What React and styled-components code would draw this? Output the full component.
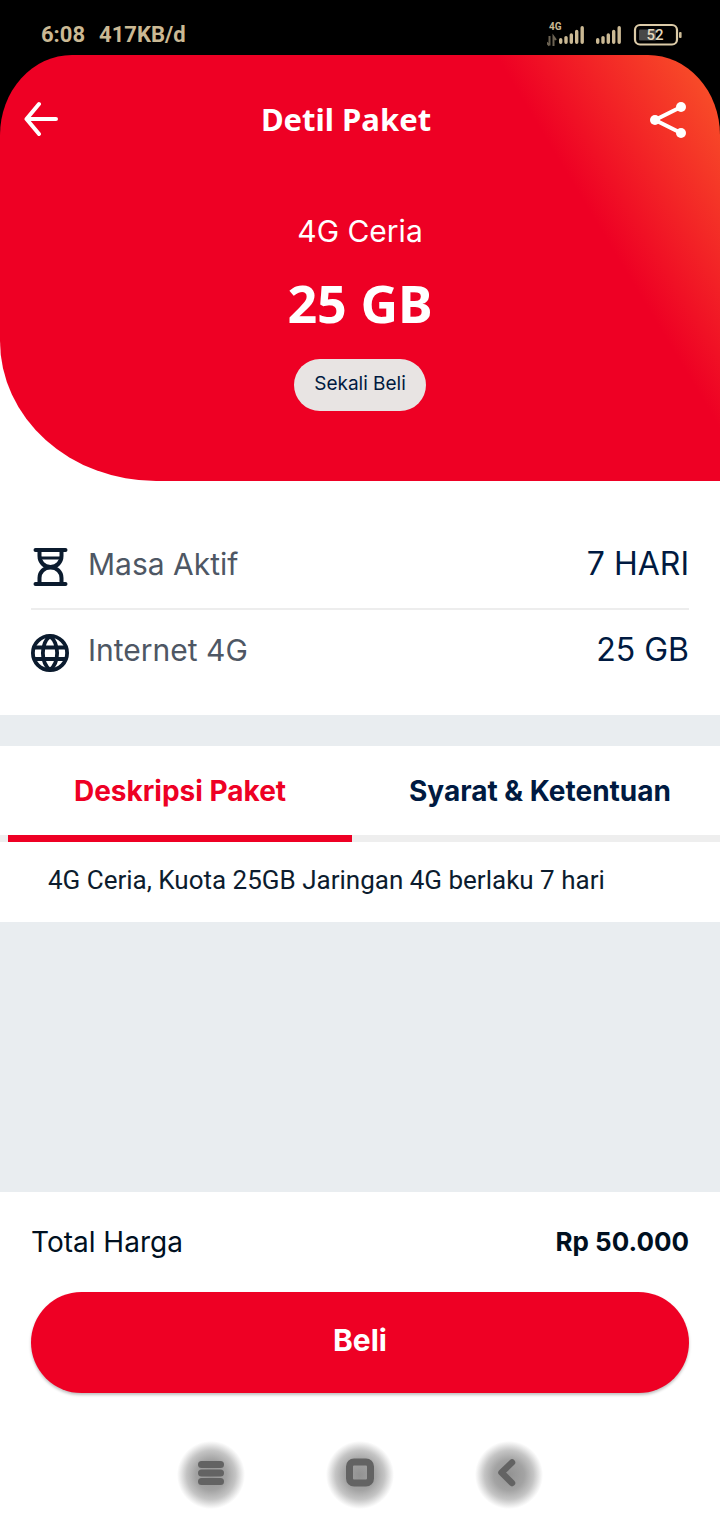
import React from "react";
import styled, { createGlobalStyle } from "styled-components";

const GlobalStyle = createGlobalStyle`
  *, *::before, *::after { box-sizing: border-box; }
  body { margin: 0; background: #fff; font-family: Inter, "Noto Sans", sans-serif; color: #001a41; }
  button { border: 0; padding: 0; background: none; font: inherit; color: inherit; cursor: pointer; }
  h1, h2, p, dl, dt, dd { margin: 0; font-weight: 400; }
  svg { display: block; }
`;

const Page = styled.div`
  display: flex;
  flex-direction: column;
  min-height: 100vh;
`;

const StatusBar = styled.div`
  display: flex;
  align-items: flex-end;
  justify-content: space-between;
  height: 55px;
  padding: 0 37px 6px 41px;
  background: #000;
  color: #cbb994;
  font: 700 22px/28px Roboto, sans-serif;
`;

const StatusGroup = styled.div`
  display: flex;
  gap: 14px;
`;

const HeroBackdrop = styled.div`
  background: linear-gradient(#000 50%, #fff 50%);
`;

const Hero = styled.header`
  height: 426px;
  border-radius: 72px 72px 0 156px / 80px 80px 0 140px;
  background: linear-gradient(59deg, #ee0024 77%, #f95829 100%);
  color: #fff;
`;

const TopBar = styled.nav`
  display: flex;
  align-items: center;
  justify-content: space-between;
  height: 128px;
  padding: 0 18px 0 24px;
`;

const IconButton = styled.button`
  display: flex;
  justify-content: center;
  width: ${(p) => p.$width}px;
`;

const Title = styled.h1`
  font: 700 31px/40px "Noto Sans", sans-serif;
`;

const Summary = styled.div`
  display: flex;
  flex-direction: column;
  align-items: center;
  padding-top: 28px;
`;

const PlanName = styled.p`
  font-size: 30px;
  line-height: 40px;
`;

const Quota = styled.h2`
  margin-top: 16px;
  font: 700 52px/72px "Noto Sans", sans-serif;
`;

const Tag = styled.span`
  margin-top: 20px;
  padding: 0 20px 2px;
  border-radius: 26px;
  background: #e8e4e3;
  color: #001a41;
  font-size: 19px;
  line-height: 50px;
`;

const Benefits = styled.dl`
  padding: 43px 31px 21px;
`;

const BenefitRow = styled.div`
  display: flex;
  align-items: center;
  gap: 19px;
  height: 86px;
  padding-top: 2px;
  border-bottom: 2px solid #ededed;
  &:last-child { height: 84px; border-bottom: 0; }
`;

const BenefitLabel = styled.dt`
  flex: 1;
  padding-bottom: 6px;
  color: #4e5764;
  font-size: 30px;
  line-height: 40px;
`;

const BenefitValue = styled.dd`
  padding-bottom: 6px;
  font-size: 32px;
  line-height: 40px;
`;

const Separator = styled.div`
  height: 31px;
  background: #e9edf0;
`;

const Tabs = styled.div`
  display: grid;
  grid-template-columns: 1fr 1fr;
  height: 96px;
  box-shadow: inset 0 -7px #eee;
`;

const Tab = styled.button`
  margin: 0 8px;
  border-bottom: 7px solid ${(p) => (p["aria-selected"] ? "#ee0024" : "transparent")};
  color: ${(p) => (p["aria-selected"] ? "#ee0024" : "#001a41")};
  font-size: 28px;
  font-weight: 700;
  line-height: 40px;
`;

const Description = styled.p`
  padding: 18px 48px 22px;
  color: #0c1c2e;
  font: 400 26px/40px Roboto, sans-serif;
`;

const Filler = styled.div`
  flex: 1;
  background: #e9edf0;
`;

const Checkout = styled.footer`
  padding: 30px 31px 48px;
`;

const TotalRow = styled.div`
  display: flex;
  justify-content: space-between;
  color: #00101f;
  font-size: 28px;
  line-height: 40px;
`;

const Price = styled.strong`
  font-size: 26px;
  font-weight: 700;
`;

const BuyButton = styled.button`
  width: 100%;
  height: 101px;
  margin-top: 30px;
  padding-bottom: 6px;
  border-radius: 51px;
  background: #ee0024;
  box-shadow: 0 2px 3px rgba(0, 0, 0, 0.25);
  color: #fff;
  font-size: 30px;
  font-weight: 700;
  line-height: 40px;
`;

const SystemNav = styled.nav`
  display: flex;
  justify-content: center;
  gap: 81px;
  padding-bottom: 11px;
`;

const NavButton = styled.button`
  display: flex;
  justify-content: center;
  padding: 16px 0 20px;
  width: 68px;
  height: 68px;
  background: radial-gradient(closest-side, #929292 0%, #a3a3a3 45%, #c4c4c4 72%, #efefef 92%, #fff 100%);
`;

const SignalIcons = () => (
  <svg width="136" height="28" viewBox="547 21 136 28" role="img" aria-label="4G, 52%">
    <text x="549" y="30" fill="#cbb994" fontFamily="Roboto, sans-serif" fontSize="10" fontWeight="700">4G</text>
    <g stroke="#6c6353" strokeWidth="2" fill="none">
      <path d="M549.5 36V45.500M546.500 42.500L549.500 45.500M553.500 46V36.500L556 40" />
    </g>
    <g stroke="#cbb994" strokeWidth="3.400" strokeLinecap="round">
      <path d="M560.7 39.800V42.300M566 37.600V42.300M571.300 35V42.300M576.700 31.500V42.300M582.200 27.800V42.300" />
      <path d="M597.700 39.800V42.300M603 37.600V42.300M608.300 35V42.300M613.700 31.500V42.300M619.200 27.800V42.300" />
    </g>
    <rect x="635" y="25" width="42" height="19.500" rx="5" fill="none" stroke="#dccba8" strokeWidth="2.200" />
    <rect x="639" y="29.500" width="17" height="11" rx="1" fill="#484848" />
    <rect x="679" y="32" width="2.600" height="6" rx="1" fill="#cbb994" />
    <text x="655" y="40.300" textAnchor="middle" fill="#e3d7bd" fontFamily="Roboto, sans-serif" fontSize="15" fontWeight="500">52</text>
  </svg>
);

const BackIcon = () => (
  <svg width="34" height="36" viewBox="0 0 34 36" fill="none" stroke="#fff" strokeWidth="4" strokeLinecap="round" strokeLinejoin="round" aria-hidden="true">
    <path d="M15 3L2.500 18L15 33M2.500 18H32" />
  </svg>
);

const ShareIcon = () => (
  <svg width="36" height="38" viewBox="0 0 36 38" fill="#fff" aria-hidden="true">
    <path d="M31 7L5 20L31 33" fill="none" stroke="#fff" strokeWidth="4" />
    <circle cx="31" cy="7" r="5" />
    <circle cx="5" cy="20" r="5" />
    <circle cx="31" cy="33" r="5" />
  </svg>
);

const HourglassIcon = () => (
  <svg width="38" height="38" viewBox="0 0 38 38" fill="none" stroke="#0b1b2e" strokeWidth="4" strokeLinecap="round" aria-hidden="true">
    <path d="M4.500 2H34.500M4.500 36H34.500" />
    <path d="M8.500 3V8C8.500 14 13 19 19.500 19S30.500 14 30.500 8V3M8.500 35V30C8.500 24 13 19.500 19.500 19.500S30.500 24 30.500 30V35" />
    <path d="M10 10H29" strokeWidth="3" />
  </svg>
);

const GlobeIcon = () => (
  <svg width="38" height="38" viewBox="0 0 38 38" fill="none" stroke="#0b1b2e" strokeWidth="3.800" aria-hidden="true">
    <circle cx="19" cy="19" r="17.100" />
    <path d="M19 2C9.500 10 9.500 28 19 36C28.500 28 28.500 10 19 2ZM4 13.500H34M4 25H34" />
  </svg>
);

const MenuIcon = () => (
  <svg width="28" height="32" viewBox="0 0 28 32" fill="#636363" aria-hidden="true">
    <rect x="1" y="4" width="26" height="7" rx="3.500" />
    <rect x="1" y="12.500" width="26" height="7" rx="3.500" />
    <rect x="1" y="21" width="26" height="7" rx="3.500" />
  </svg>
);

const HomeIcon = () => (
  <svg width="28" height="32" viewBox="0 0 28 32" fill="none" stroke="#636363" strokeWidth="7" aria-hidden="true">
    <rect x="3.500" y="5" width="21" height="21" rx="4.500" />
  </svg>
);

const PrevIcon = () => (
  <svg width="28" height="32" viewBox="0 0 28 32" fill="none" stroke="#636363" strokeWidth="6.500" strokeLinecap="round" strokeLinejoin="round" aria-hidden="true">
    <path d="M17 5.500L6.500 15.500L17 26" />
  </svg>
);

export default function App() {
  return (
    <>
      <GlobalStyle />
      <Page>
        <StatusBar>
          <StatusGroup>
            <span>6:08</span>
            <span>417KB/d</span>
          </StatusGroup>
          <SignalIcons />
        </StatusBar>
        <HeroBackdrop>
          <Hero>
            <TopBar>
              <IconButton $width={34} aria-label="Kembali"><BackIcon /></IconButton>
              <Title>Detil Paket</Title>
              <IconButton $width={68} aria-label="Bagikan"><ShareIcon /></IconButton>
            </TopBar>
            <Summary>
              <PlanName>4G Ceria</PlanName>
              <Quota>25 GB</Quota>
              <Tag>Sekali Beli</Tag>
            </Summary>
          </Hero>
        </HeroBackdrop>
        <Benefits>
          <BenefitRow>
            <HourglassIcon />
            <BenefitLabel>Masa Aktif</BenefitLabel>
            <BenefitValue>7 HARI</BenefitValue>
          </BenefitRow>
          <BenefitRow>
            <GlobeIcon />
            <BenefitLabel>Internet 4G</BenefitLabel>
            <BenefitValue>25 GB</BenefitValue>
          </BenefitRow>
        </Benefits>
        <Separator />
        <Tabs role="tablist">
          <Tab role="tab" aria-selected={true}>Deskripsi Paket</Tab>
          <Tab role="tab" aria-selected={false}>Syarat &amp; Ketentuan</Tab>
        </Tabs>
        <Description>4G Ceria, Kuota 25GB Jaringan 4G berlaku 7 hari</Description>
        <Filler />
        <Checkout>
          <TotalRow>
            <span>Total Harga</span>
            <Price>Rp 50.000</Price>
          </TotalRow>
          <BuyButton>Beli</BuyButton>
        </Checkout>
        <SystemNav>
          <NavButton aria-label="Menu"><MenuIcon /></NavButton>
          <NavButton aria-label="Beranda"><HomeIcon /></NavButton>
          <NavButton aria-label="Sebelumnya"><PrevIcon /></NavButton>
        </SystemNav>
      </Page>
    </>
  );
}
